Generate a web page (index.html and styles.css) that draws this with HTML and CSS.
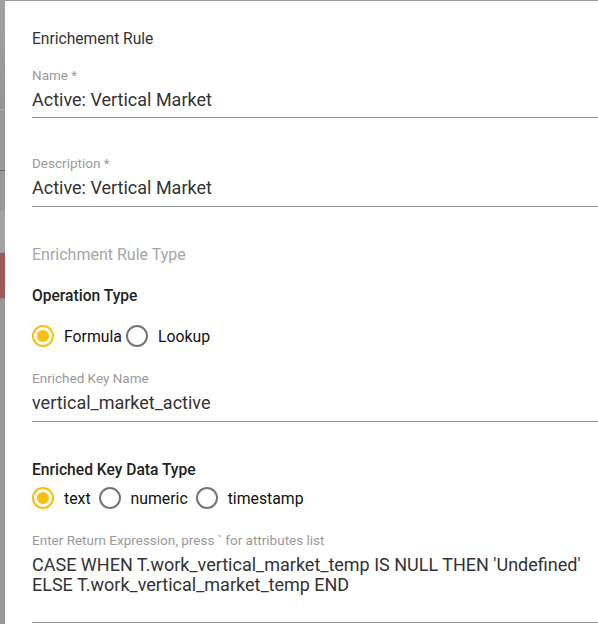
FILE: index.html
```html
<!DOCTYPE html>
<html>
<head>
<meta charset="utf-8">
<link rel="stylesheet" href="styles.css">
</head>
<body>
<div class="backdrop">
  <div class="strip">
    <div class="s1"></div>
    <div class="s2"></div>
    <div class="s3"></div>
    <div class="s4"></div>
    <div class="s5"></div>
    <div class="s6"></div>
  </div>
  <div class="dialog">
    <div class="title">Enrichement Rule</div>
    <div class="field f-name">
      <div class="label">Name *</div>
      <div class="value">Active: Vertical Market</div>
    </div>
    <div class="field f-desc">
      <div class="label">Description *</div>
      <div class="value">Active: Vertical Market</div>
    </div>
    <div class="section">Enrichment Rule Type</div>
    <div class="group-title">Operation Type</div>
    <div class="radios r-op">
      <label class="radio checked"><span class="dot"></span><span class="rtext">Formula</span></label>
      <label class="radio"><span class="dot"></span><span class="rtext">Lookup</span></label>
    </div>
    <div class="field f-key">
      <div class="label">Enriched Key Name</div>
      <div class="value">vertical_market_active</div>
    </div>
    <div class="group-title g-dt">Enriched Key Data Type</div>
    <div class="radios r-dt">
      <label class="radio checked"><span class="dot"></span><span class="rtext">text</span></label>
      <label class="radio"><span class="dot"></span><span class="rtext">numeric</span></label>
      <label class="radio"><span class="dot"></span><span class="rtext">timestamp</span></label>
    </div>
    <div class="field f-expr">
      <div class="label">Enter Return Expression, press ` for attributes list</div>
      <div class="value multi">CASE WHEN T.work_vertical_market_temp IS NULL THEN 'Undefined'<br>ELSE T.work_vertical_market_temp END</div>
    </div>
  </div>
</div>
</body>
</html>
```
FILE: styles.css
```css
* { box-sizing: border-box; }
html, body { margin: 0; padding: 0; }
body {
  width: 598px;
  height: 624px;
  overflow: hidden;
  font-family: Roboto, "Liberation Sans", sans-serif;
  background: #999;
}
.backdrop {
  display: flex;
  height: 624px;
}
.strip {
  width: 5px;
  flex: none;
  display: flex;
  flex-direction: column;
}
.s1 { height: 110px; background: linear-gradient(#a2a2a2, #969696); border-bottom: 1px solid #aaa; }
.s2 { height: 61px; background: #999; border-bottom: 1px solid #666; }
.s3 { height: 40px; background: #9a9a9a; }
.s4 { height: 42px; background: #a3a3a3; }
.s5 { height: 46px; background: #a05858; border-bottom: 1px solid #8a8a8a; }
.s6 { flex: 1; background: #999; }
.dialog {
  flex: 1;
  margin-top: 1px;
  background: #fff;
  padding: 28px 0 0 27px;
  overflow: hidden;
  color: #333;
}
.title {
  font-size: 15.6px;
  line-height: 20px;
  color: #333;
}
.field {
  border-bottom: 1px solid #949494;
}
.label {
  font-size: 13.5px;
  line-height: 16px;
  color: #9a9a9a;
}
.value {
  font-size: 18px;
  line-height: 22px;
  color: #333;
  margin-top: 6px;
  padding-bottom: 6px;
}
.f-name { margin-top: 18px; }
.f-desc { margin-top: 37px; }
.f-desc .value { padding-bottom: 7px; }
.section {
  margin-top: 38px;
  font-size: 16px;
  line-height: 20px;
  color: #a6a6a6;
}
.group-title {
  margin-top: 21px;
  font-size: 15.6px;
  line-height: 20px;
  font-weight: 500;
  color: #222;
}
.radios {
  display: flex;
  align-items: center;
}
.r-op { margin-top: 19px; gap: 4px; }
.r-dt { margin-top: 7px; gap: 8px; }
.radio {
  display: flex;
  align-items: center;
  gap: 10px;
  font-size: 15.8px;
  color: #111;
  font-weight: 400;
}
.dot {
  width: 22px;
  height: 22px;
  border-radius: 50%;
  border: 2px solid #757575;
  display: flex;
  align-items: center;
  justify-content: center;
}
.checked .dot { border-color: #fbbd12; }
.checked .dot::after {
  content: "";
  width: 12px;
  height: 12px;
  border-radius: 50%;
  background: #fbbd12;
}
.f-key { margin-top: 23px; }
.f-key .value { padding-bottom: 7px; }
.g-dt { margin-top: 38px; }
.f-expr { margin-top: 23px; }
.multi {
  line-height: 20px;
  margin-top: 7px;
  padding-bottom: 27px;
  white-space: nowrap;
}
```
